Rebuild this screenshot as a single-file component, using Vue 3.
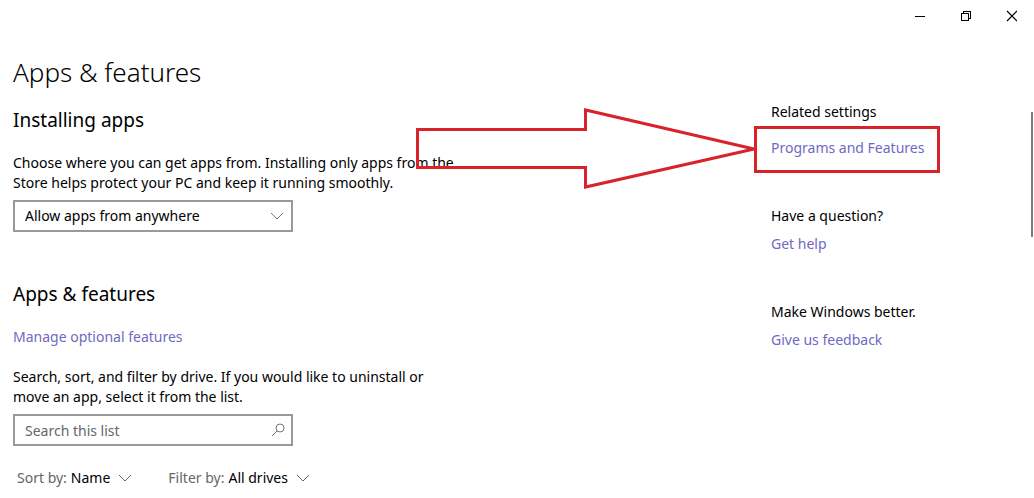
<script setup>
import { ref } from 'vue';

const source = ref('anywhere');
const search = ref('');
const sortBy = ref('name');
const drive = ref('all');
</script>

<template>
  <div class="window">

    <header class="title-bar">
      <button class="window-btn" aria-label="Minimize">
        <svg width="12" height="12" viewBox="0 0 12 12" fill="none" stroke="currentColor" shape-rendering="crispEdges">
          <path d="M2 6.5h10"></path>
        </svg>
      </button>
      <button class="window-btn" aria-label="Restore">
        <svg width="12" height="12" viewBox="0 0 12 12" fill="none" stroke="currentColor" shape-rendering="crispEdges">
          <path d="M2.5 3.5h7v7h-7z"></path>
          <path d="M4.5 3.5v-2h7v7h-2"></path>
        </svg>
      </button>
      <button class="window-btn" aria-label="Close">
        <svg width="12" height="12" viewBox="0 0 12 12" fill="none" stroke="currentColor" stroke-width="1.2">
          <path d="M2 1l10 10M12 1L2 11"></path>
        </svg>
      </button>
    </header>

    <div class="page">
      <main class="content">
        <h1 class="page-title">Apps &amp; features</h1>

        <section class="installing">
          <h2 class="section-title">Installing apps</h2>
          <p class="text">
            <label for="source">Choose where you can get apps from. Installing only apps from the<br>Store helps protect your PC and keep it running smoothly.</label>
          </p>
          <div class="field">
            <select id="source" v-model="source" class="field-control">
              <option value="anywhere">Allow apps from anywhere</option>
              <option value="store">Allow apps from the Store only</option>
            </select>
            <svg class="field-icon" width="14" height="14" viewBox="0 0 14 14" fill="none" stroke="currentColor">
              <path d="M0 4l6 6 6-6"></path>
            </svg>
          </div>
        </section>

        <section>
          <h2 class="section-title">Apps &amp; features</h2>
          <a class="link optional" href="#">Manage optional features</a>
          <p class="text">
            <label for="search">Search, sort, and filter by drive. If you would like to uninstall or<br>move an app, select it from the list.</label>
          </p>
          <div class="field">
            <input id="search" v-model="search" class="field-control" type="text" placeholder="Search this list">
            <svg class="field-icon" width="14" height="14" viewBox="0 0 14 14" fill="none" stroke="currentColor">
              <circle cx="9" cy="5" r="4"></circle>
              <path d="M6 8l-5 5"></path>
            </svg>
          </div>

          <div class="filters">
            <div class="filter">
              <label for="sort">Sort by:</label>
              <select id="sort" v-model="sortBy" class="filter-select">
                <option value="name">Name</option>
                <option value="size">Size</option>
                <option value="date">Install date</option>
              </select>
              <svg width="14" height="14" viewBox="0 0 14 14" fill="none" stroke="currentColor">
                <path d="M1 4l6 6 6-6"></path>
              </svg>
            </div>
            <div class="filter">
              <label for="drive">Filter by:</label>
              <select id="drive" v-model="drive" class="filter-select">
                <option value="all">All drives</option>
                <option value="c">Windows (C:)</option>
              </select>
              <svg width="14" height="14" viewBox="0 0 14 14" fill="none" stroke="currentColor">
                <path d="M1 4l6 6 6-6"></path>
              </svg>
            </div>
          </div>
        </section>
      </main>

      <aside class="related">
        <section class="related-group">
          <h3 class="related-title">Related settings</h3>
          <div class="callout">
            <a class="link" href="#">Programs and Features</a>
            <svg class="arrow" width="342" height="82" viewBox="0 0 342 82" fill="none" stroke="#d9232b" stroke-width="3" aria-hidden="true">
              <path d="M2.500 22.500H170.500V3L339 42L170.500 80V60.500H2.500z"></path>
            </svg>
          </div>
        </section>
        <section class="related-group">
          <h3 class="related-title">Have a question?</h3>
          <a class="link" href="#">Get help</a>
        </section>
        <section class="related-group">
          <h3 class="related-title">Make Windows better.</h3>
          <a class="link" href="#">Give us feedback</a>
        </section>
      </aside>

      <div class="scroll-thumb"></div>
    </div>

  </div>
</template>

<style>
body {
  background: #fff;
}
</style>

<style scoped>
.window {
  overflow: hidden;
  background: #fff;
  color: #000;
  font-family: "Noto Sans", "Open Sans", sans-serif;
  font-size: 14px;
  line-height: 20px;
}

.title-bar {
  display: flex;
  justify-content: flex-end;
  height: 32px;
}

.window-btn {
  display: flex;
  align-items: center;
  justify-content: center;
  width: 46px;
  padding: 0;
  border: none;
  background: none;
  color: #000;
}

.window-btn:hover {
  background: #e5e5e5;
}

.page {
  display: flex;
  padding-left: 13px;
}

.content {
  flex: 1;
  padding-top: 20px;
}

.page-title {
  margin: 0 0 16px;
  font-size: 26px;
  font-weight: 300;
  line-height: 40px;
}

.section-title {
  margin: 0;
  font-size: 19px;
  font-weight: 400;
  line-height: 25px;
}

.installing {
  margin-bottom: 50px;
}

.text {
  margin: 20px 0 7px;
}

.link {
  color: #6f69c2;
  text-decoration: none;
}

.link:hover {
  color: #999;
}

.optional {
  display: block;
  margin-top: 20px;
}

.field {
  position: relative;
  width: 280px;
}

.field-control {
  box-sizing: border-box;
  display: block;
  width: 100%;
  height: 32px;
  padding: 0 32px 0 10px;
  border: 2px solid #999;
  border-radius: 0;
  background: #fff;
  color: #000;
  font: inherit;
  appearance: none;
}

.field-control::placeholder {
  color: #666;
  opacity: 1;
}

.field-icon {
  position: absolute;
  top: 9px;
  right: 8px;
  color: #777;
  pointer-events: none;
}

.filters {
  display: flex;
  gap: 36px;
  padding: 22px 0 10px 4px;
}

.filter {
  display: flex;
  align-items: center;
  color: #666;
}

.filter-select {
  margin: 0 8px 0 4px;
  padding: 0;
  border: none;
  background: none;
  color: #000;
  font: inherit;
  appearance: none;
  field-sizing: content;
}

.related {
  width: 260px;
  padding-top: 70px;
}

.related-group {
  margin-bottom: 48px;
}

.related-title {
  margin: 0 0 8px;
  font-size: 14px;
  font-weight: 400;
}

.related-group .link {
  display: block;
  white-space: nowrap;
}

/* negative margins keep the link aligned with the other groups */
.callout {
  position: relative;
  box-sizing: border-box;
  width: 186px;
  margin: -4px 0 -15px -17px;
  padding: 9px 14px 12px;
  border: 3px solid #d9232b;
}

.arrow {
  position: absolute;
  top: -22px;
  right: 100%;
  pointer-events: none;
}

.scroll-thumb {
  width: 2px;
  height: 125px;
  margin: 80px 1px 0 0;
  background: #7a7a7a;
}
</style>
